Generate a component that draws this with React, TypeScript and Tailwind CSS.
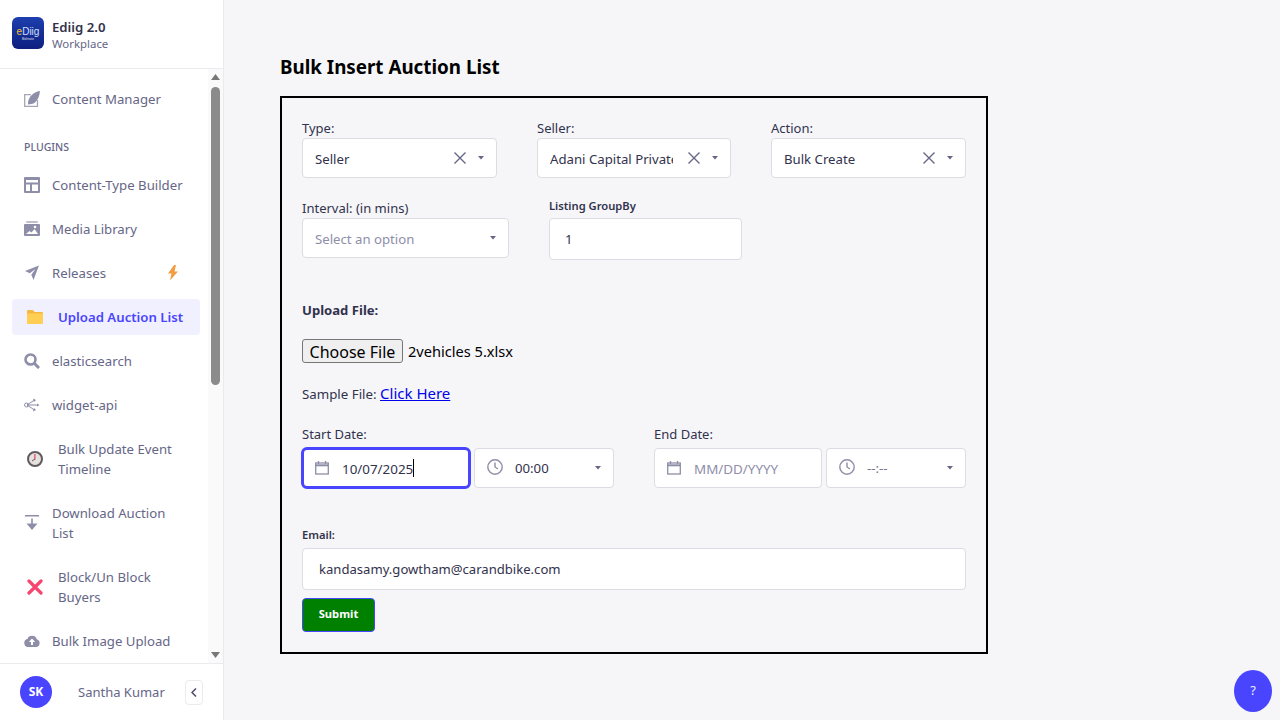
import { ReactNode } from "react";

const Chevron = () => (
  <svg width="6" height="4" viewBox="0 0 6 4" className="shrink-0">
    <path d="M0 0h6L3 3.500z" fill="#666687" />
  </svg>
);

const Clear = () => (
  <svg width="12" height="12" viewBox="0 0 12 12" fill="none" stroke="#666687" strokeWidth="1.4">
    <path d="M.5.5l11 11M11.500.5l-11 11" />
  </svg>
);

const CalendarIcon = () => (
  <svg width="14" height="14" viewBox="0 0 14 14" fill="none" stroke="#8e8ea9" strokeWidth="1.3" className="shrink-0">
    <rect x=".7" y="2" width="12.600" height="11" />
    <path d="M1 4.300h12" strokeWidth="2" />
    <path d="M3.500 0v3M10.500 0v3" />
  </svg>
);

const ClockIcon = () => (
  <svg width="16" height="16" viewBox="0 0 16 16" fill="none" stroke="#8e8ea9" strokeWidth="1.400" className="shrink-0 -mt-[2px]">
    <circle cx="8" cy="8" r="7.200" />
    <path d="M8 3.500V8l3 2" />
  </svg>
);

const navIcons: Record<string, ReactNode> = {
  content: (
    <svg width="16" height="16" viewBox="0 0 16 16">
      <path d="M7 3.600H.7v11.700h12.800V9" fill="none" stroke="#a5a5ba" strokeWidth="1.300" />
      <path d="M16 0C15.500 5 14 9 11 11.500 9 13 6 13 4 13.500L4 12C4.500 6 9 1 16 0z" fill="#8e8ea9" />
    </svg>
  ),
  builder: (
    <svg width="16" height="16" viewBox="0 0 16 16">
      <path fillRule="evenodd" d="M1 0h14a1 1 0 0 1 1 1v14a1 1 0 0 1-1 1H1a1 1 0 0 1-1-1V1a1 1 0 0 1 1-1zM2 3v2.500h12V3zM2 7.500V14h4V7.500zM8 7.500V14h6V7.500z" fill="#8e8ea9" />
    </svg>
  ),
  media: (
    <svg width="16" height="16" viewBox="0 0 16 16">
      <rect x="2" y="0" width="12" height="2" rx="1" fill="#c0c0cf" />
      <path fillRule="evenodd" d="M1 3h14a1 1 0 0 1 1 1v10a1 1 0 0 1-1 1H1a1 1 0 0 1-1-1V4a1 1 0 0 1 1-1zM2 13h12l-3.500-5-3 3.500L5.500 10z" fill="#8e8ea9" />
      <circle cx="11" cy="6" r="1.300" fill="#fff" />
    </svg>
  ),
  releases: (
    <svg width="16" height="16" viewBox="0 0 16 16">
      <path d="M15 0.500L1 6l4.800 2.200 5.700-4.200-4.200 5.700 2.200 5.300z" fill="#8e8ea9" />
    </svg>
  ),
  search: (
    <svg width="16" height="16" viewBox="0 0 16 16" fill="none" stroke="#8e8ea9">
      <circle cx="6.500" cy="6.500" r="5" strokeWidth="2.600" />
      <path d="M10.500 10.500l4.500 4.500" strokeWidth="3" />
    </svg>
  ),
  widget: (
    <svg width="16" height="14" viewBox="0 0 16 14" fill="none" stroke="#8e8ea9" strokeWidth="1">
      <path d="M3 7L10.500 2M3 7h10M3 7l7.500 5" />
      <circle cx="2.500" cy="7" r="2" />
      <path d="M9 .5l3 1.500-2 2zM13 5.500L15.500 7 13 8.500zM9 13.500l3-1.500-2-2z" fill="#8e8ea9" stroke="none" />
    </svg>
  ),
  timeline: (
    <svg width="16" height="16" viewBox="0 0 16 16">
      <circle cx="8" cy="8" r="7" fill="#e6e1dc" stroke="#5f5a5f" strokeWidth="2" />
      <path d="M7.300 3h1.200v5.500H7.300z" fill="#d9476d" />
      <path d="M8 8L5 10" stroke="#5f5a5f" strokeWidth="1" />
    </svg>
  ),
  download: (
    <svg width="14" height="16" viewBox="0 0 14 16">
      <rect x="0" y="0" width="14" height="1.500" fill="#8e8ea9" />
      <rect x="6.200" y="3.500" width="1.600" height="6" fill="#8e8ea9" />
      <path d="M1.500 8.500h11L7 15z" fill="#8e8ea9" />
    </svg>
  ),
  block: (
    <svg width="16" height="16" viewBox="0 0 16 16" fill="none" stroke="#f6466f" strokeWidth="3.200" strokeLinecap="round">
      <path d="M2 2l12 12M14 2L2 14" />
    </svg>
  ),
  upload: (
    <svg width="16" height="12" viewBox="0 0 16 12">
      <path fillRule="evenodd" d="M4 12a4 4 0 0 1-.6-7.900A5 5 0 0 1 12.800 4.200 4 4 0 0 1 12 12zM8 3.500L4.800 7H7v3h2V7h2.200z" fill="#8e8ea9" />
    </svg>
  ),
};

const NavItem = ({ icon, label, tall, inset }: { icon: string; label: ReactNode; tall?: boolean; inset?: boolean }) => (
  <div className={`flex items-center pr-3 ${tall ? "h-14" : "h-9"} ${inset ? "pl-[14px]" : "pl-3"}`}>
    <span className={`flex justify-center shrink-0 ${inset ? "w-[18px] mr-[14px]" : "w-4 mr-3"}`}>{navIcons[icon]}</span>
    <span className="text-[13.200px] leading-5 text-[#666687]">{label}</span>
  </div>
);

const Label = ({ children }: { children: ReactNode }) => (
  <div className="text-[13px] leading-5 text-[#32324d]">{children}</div>
);

const SmallLabel = ({ children }: { children: ReactNode }) => (
  <div className="text-[11.200px] leading-4 font-semibold text-[#32324d] mb-1">{children}</div>
);

const Select = ({ value, width, placeholder, clear }: { value: string; width: string; placeholder?: boolean; clear?: boolean }) => (
  <div className={`flex items-center h-10 bg-white border border-[#dcdce4] rounded pl-3 pr-3 ${width}`}>
    <span className={`flex-1 min-w-0 mt-[3px] overflow-hidden whitespace-nowrap text-[13.200px] ${placeholder ? "text-[#8e8ea9]" : "text-[#32324d]"}`}>{value}</span>
    {clear && <span className="ml-[15px] mr-3 flex"><Clear /></span>}
    <Chevron />
  </div>
);

const DateTime = ({ date, time, focused, placeholder }: { date: string; time: string; focused?: boolean; placeholder?: boolean }) => (
  <div className="flex gap-1 mt-1">
    <div className={`flex items-center bg-white ${focused ? "w-[170px] h-[42px] -m-[1px] border-[3px] border-[#4945ff] rounded-md pl-[11px]" : "w-[168px] h-10 border border-[#dcdce4] rounded pl-3"}`}>
      <CalendarIcon />
      <span className={`ml-[13px] mt-[2px] text-[13.400px] ${placeholder ? "text-[#8e8ea9]" : "text-[#32324d]"}`}>{date}</span>
      {focused && <span className="w-[1px] h-[18px] bg-black" />}
    </div>
    <div className="flex items-center w-[140px] h-10 bg-white border border-[#dcdce4] rounded pl-3 pr-3">
      <ClockIcon />
      <span className={`ml-3 mt-[2px] flex-1 text-[13.200px] ${placeholder ? "text-[#77778f]" : "text-[#32324d]"}`}>{time}</span>
      <Chevron />
    </div>
  </div>
);

export default function App() {
  return (
    <div className="flex h-[720px] w-[1280px] overflow-hidden bg-[#f6f6f9] font-['Noto_Sans','Open_Sans',sans-serif]">
      <aside className="flex flex-col w-[224px] shrink-0 bg-white border-r border-[#eaeaef]">
        <div className="flex items-start h-[69px] shrink-0 pl-3 pt-[17px] gap-2 border-b border-[#eaeaef]">
          <div className="flex flex-col items-center justify-center w-8 h-8 rounded-md bg-gradient-to-b from-[#1d3fae] to-[#0e1f80]">
            <span className="text-[10px] leading-[11px] text-[#cfe0ff] font-['Liberation_Sans',sans-serif]"><span className="text-[#f2c230]">e</span>Diig</span>
            <span className="text-[3px] leading-[4px] text-white/80">Bidmate</span>
          </div>
          <div className="mt-[1px]">
            <div className="text-[13.200px] leading-[18px] font-semibold text-[#32324d]">Ediig 2.0</div>
            <div className="text-[11.400px] leading-4 text-[#666687]">Workplace</div>
          </div>
        </div>

        <div className="flex flex-1 min-h-0">
          <nav className="flex-1 overflow-hidden pt-3 pl-3 pr-2">
            <div className="flex flex-col gap-2">
              <NavItem icon="content" label="Content Manager" />
            </div>
            <div className="mt-[22px] mb-[12px] pl-3 text-[10.500px] leading-4 font-medium text-[#666687]">PLUGINS</div>
            <div className="flex flex-col gap-2">
              <NavItem icon="builder" label="Content-Type Builder" />
              <NavItem icon="media" label="Media Library" />
              <div className="relative">
                <NavItem icon="releases" label="Releases" />
                <svg width="12" height="16" viewBox="0 0 12 16" className="absolute right-[21px] top-[10px]">
                  <path d="M7 0L1 8.500h3.500L3 15.500 11 6.500H7.500L9 0z" fill="#f29d41" />
                </svg>
              </div>
              <div className="flex items-center h-9 pl-[15px] rounded bg-[#f0f0ff]">
                <svg width="16" height="14" viewBox="0 0 16 14" className="mr-[15px]">
                  <path d="M0 1a1 1 0 0 1 1-1h5l1.500 2H15a1 1 0 0 1 1 1v1H0z" fill="#f5b93f" />
                  <path d="M0 3.500h16V13a1 1 0 0 1-1 1H1a1 1 0 0 1-1-1z" fill="#ffce55" />
                </svg>
                <span className="mt-[1px] text-[13.200px] font-semibold text-[#4945ff]">Upload Auction List</span>
              </div>
              <NavItem icon="search" label="elasticsearch" />
              <NavItem icon="widget" label="widget-api" />
              <NavItem icon="timeline" label={<>Bulk Update Event<br />Timeline</>} tall inset />
              <NavItem icon="download" label={<>Download Auction<br />List</>} tall />
              <NavItem icon="block" label={<>Block/Un Block<br />Buyers</>} tall inset />
              <NavItem icon="upload" label="Bulk Image Upload" />
            </div>
          </nav>
          <div className="relative w-[15px] shrink-0 bg-[#fafafa]">
            <svg width="9" height="6" viewBox="0 0 9 6" className="absolute left-[3px] top-[5px]"><path d="M0 6L4.500 0 9 6z" fill="#777" /></svg>
            <div className="absolute left-[3px] top-[18px] w-[9px] h-[298px] rounded-full bg-[#8b8b8b]" />
            <svg width="9" height="6" viewBox="0 0 9 6" className="absolute left-[3px] bottom-[5px]"><path d="M0 0h9L4.500 6z" fill="#777" /></svg>
          </div>
        </div>

        <div className="flex items-center h-[57px] shrink-0 pl-5 pr-5 border-t border-[#eaeaef]">
          <div className="flex items-center justify-center w-8 h-8 rounded-full bg-[#4945ff] text-white text-xs font-bold">SK</div>
          <span className="ml-[26px] mt-[1px] text-[13px] text-[#666687]">Santha Kumar</span>
          <div className="flex items-center justify-center ml-auto w-[18px] h-[25px] bg-white border border-[#eaeaef] rounded">
            <svg width="6" height="9" viewBox="0 0 6 9" fill="none" stroke="#4a4a6a" strokeWidth="1.500"><path d="M5 .5l-4 4 4 4" /></svg>
          </div>
        </div>
      </aside>

      <main className="relative flex-1 pl-14 pt-[54px]">
        <h1 className="text-[18.800px] leading-[26px] font-bold text-black mb-[16px]">Bulk Insert Auction List</h1>
        <div className="w-[708px] h-[558px] border-2 border-black pt-5 pl-5 pr-5">
          <div className="flex gap-10">
            <div><Label>Type:</Label><Select value="Seller" width="w-[195px]" clear /></div>
            <div><Label>Seller:</Label><Select value="Adani Capital Private Limited" width="w-[194px]" clear /></div>
            <div><Label>Action:</Label><Select value="Bulk Create" width="w-[195px]" clear /></div>
          </div>
          <div className="flex gap-10 mt-5">
            <div><Label>Interval: (in mins)</Label><Select value="Select an option" width="w-[207px]" placeholder /></div>
            <div>
              <SmallLabel>Listing GroupBy</SmallLabel>
              <div className="flex items-center w-[193px] h-[42px] pl-[15px] pt-[2px] bg-white border border-[#dcdce4] rounded text-[13.200px] text-[#32324d]">1</div>
            </div>
          </div>

          <div className="mt-[40px] text-[13.100px] leading-5 font-bold text-[#32324d]">Upload File:</div>
          <div className="flex items-center mt-[19px] h-6 text-black">
            <button className="w-[101px] h-6 text-base bg-[#efefef] border border-[#767676] rounded-[3px]">Choose File</button>
            <span className="ml-[5px] mt-[1px] text-[14.600px]">2vehicles 5.xlsx</span>
          </div>
          <div className="flex items-baseline mt-[19px] h-6 text-[13.300px] text-[#32324d]">
            Sample File:&nbsp;<a className="text-[15px] text-[#0000ee] underline">Click Here</a>
          </div>

          <div className="flex gap-10 mt-[18px]">
            <div>
              <Label>Start Date:</Label>
              <DateTime date="10/07/2025" time="00:00" focused />
            </div>
            <div>
              <Label>End Date:</Label>
              <DateTime date="MM/DD/YYYY" time="--:--" placeholder />
            </div>
          </div>

          <div className="mt-[39px] pb-[1px]"><SmallLabel>Email:</SmallLabel></div>
          <div className="flex items-center w-[664px] h-[42px] pl-[16px] pt-[2px] bg-white border border-[#dcdce4] rounded text-[13.100px] text-[#32324d]">kandasamy.gowtham@carandbike.com</div>
          <button className="mt-2 w-[73px] h-[34px] pb-[2px] bg-[#008000] border border-[#4945ff] rounded text-[11.200px] font-bold text-white">Submit</button>
        </div>
        <div className="absolute right-2 bottom-2 flex items-center justify-center w-[38px] h-[42px] rounded-[50%] bg-[#4945ff] text-[13px] text-white/90">?</div>
      </main>
    </div>
  );
}
